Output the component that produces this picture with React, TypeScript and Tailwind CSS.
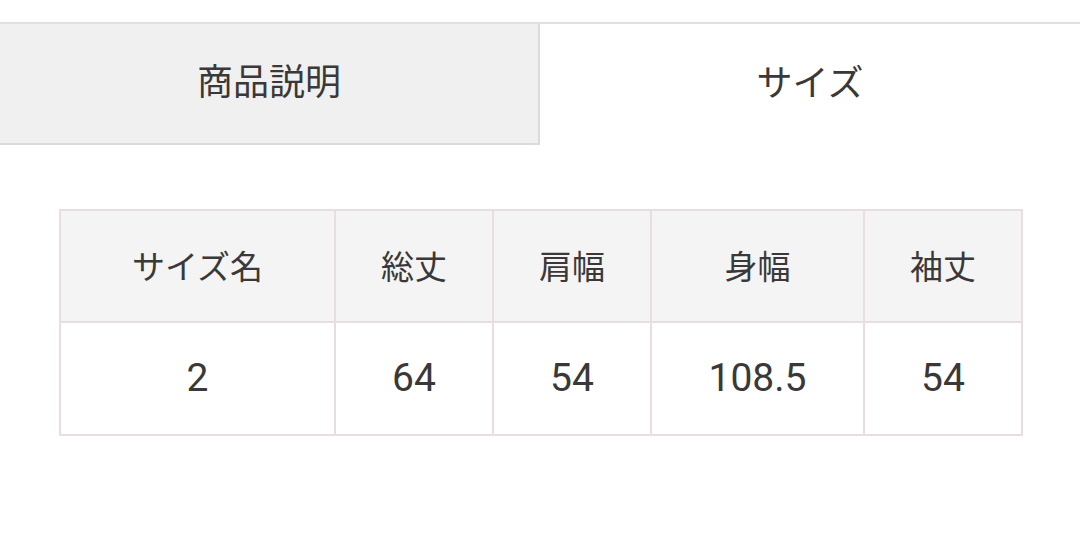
const headers = ["サイズ名", "総丈", "肩幅", "身幅", "袖丈"];
const values = ["2", "64", "54", "108.5", "54"];
const widths = ["w-[275px]", "w-[158px]", "w-[158px]", "w-[213px]", "w-[158px]"];

const jp = "font-['Noto_Sans_CJK_JP','Noto_Sans',sans-serif]";

export default function App() {
  return (
    <div className="w-[1080px] h-[539px] bg-white text-[#3a3838] overflow-hidden">
      <div className="h-[22px]" />

      {/* Tabs */}
      <div className="flex border-t-2 border-[#e4e0e0]">
        <button
          className={`w-[540px] h-[121px] bg-[#f0f0f0] border-r-2 border-b-2 border-[#dedada] text-[36px] ${jp} flex items-center justify-center pb-[10px]`}
        >
          商品説明
        </button>
        <button
          className={`flex-1 h-[121px] bg-white text-[36px] ${jp} flex items-center justify-center pb-[10px]`}
        >
          サイズ
        </button>
      </div>

      {/* Size table */}
      <div className="px-[59px] pt-[64px]">
        <table className="border-collapse w-[962px] table-fixed">
          <thead>
            <tr className="h-[112px] bg-[#f4f4f4]">
              {headers.map((h, i) => (
                <th
                  key={h}
                  className={`${widths[i]} border-2 border-[#e8dedf] font-normal text-[33px] ${jp}`}
                >
                  {h}
                </th>
              ))}
            </tr>
          </thead>
          <tbody>
            <tr className="h-[113px]">
              {values.map((v, i) => (
                <td
                  key={i}
                  className="border-2 border-[#e8dedf] text-center text-[39px] font-['Roboto','Liberation_Sans',sans-serif]"
                >
                  {v}
                </td>
              ))}
            </tr>
          </tbody>
        </table>
      </div>
    </div>
  );
}
